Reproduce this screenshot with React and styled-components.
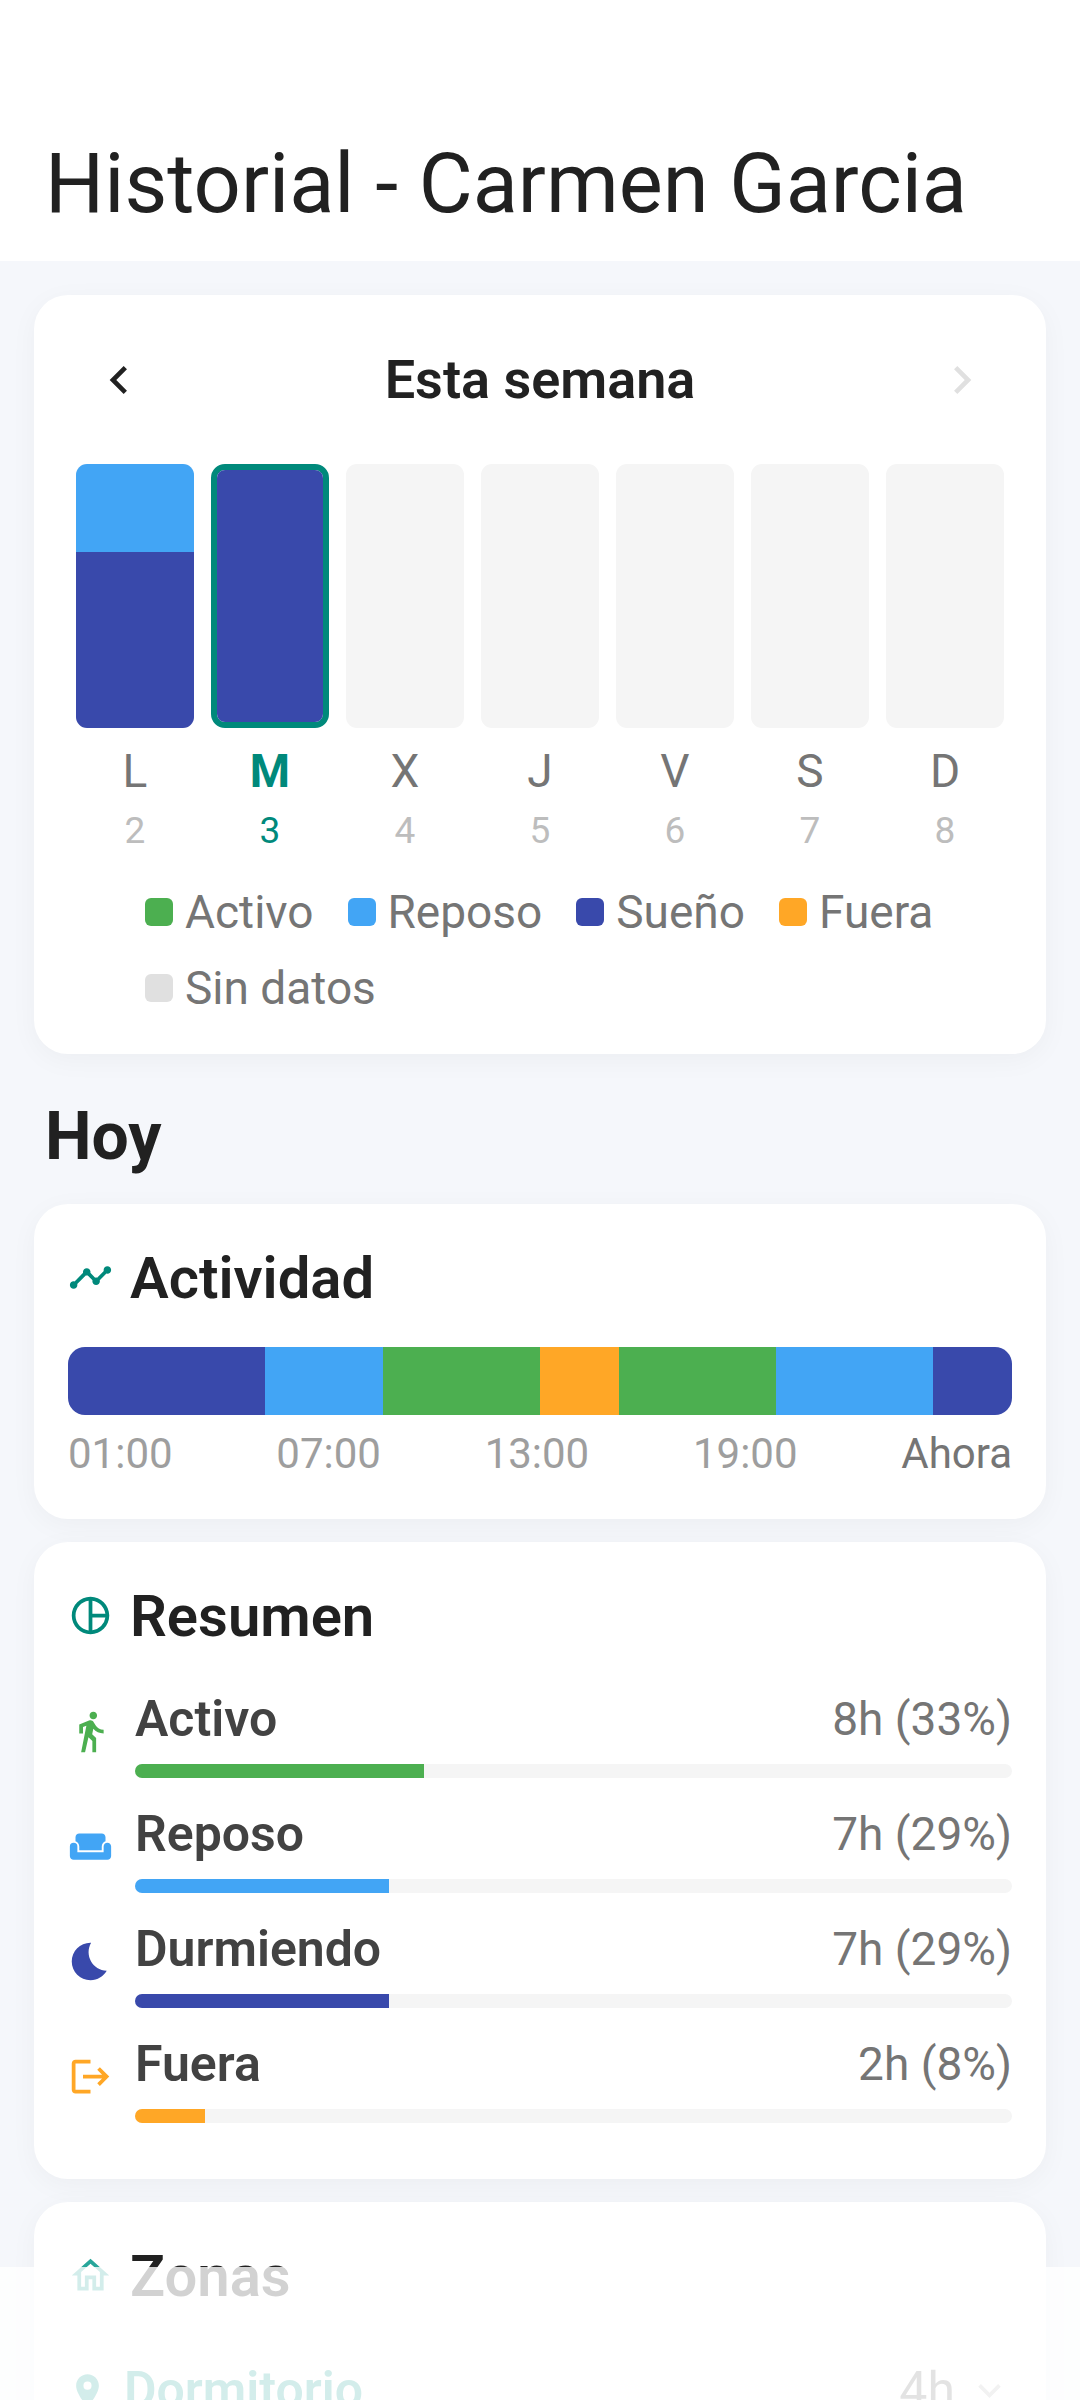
import { useState } from "react";
import styled, { createGlobalStyle, ThemeProvider } from "styled-components";
import {
    MdBedtime,
    MdChevronLeft,
    MdChevronRight,
    MdDirectionsWalk,
    MdExpandMore,
    MdLogout,
    MdOutlineHome,
    MdPieChartOutline,
    MdPlace,
    MdTimeline,
    MdWeekend,
} from "react-icons/md";

const theme = {
    colors: {
        background: "#f5f7fb",
        card: "#ffffff",
        primary: "#00897b",
        zone: "#26a69a",
        text: "#212121",
        label: "#424242",
        secondary: "#757575",
        muted: "#9e9e9e",
        faint: "#bdbdbd",
        disabled: "#e0e0e0",
        track: "#f5f5f5",
        active: "#4caf50",
        rest: "#42a5f5",
        sleep: "#3949ab",
        away: "#ffa726",
    },
};

const GlobalStyle = createGlobalStyle`
    * {
        box-sizing: border-box;
    }
    body {
        margin: 0;
        font-family: Roboto, "Liberation Sans", sans-serif;
        font-weight: 450;
        color: ${(props) => props.theme.colors.text};
        background-color: ${(props) => props.theme.colors.background};
    }
    h1, h2, h3, ul {
        margin: 0;
        padding: 0;
    }
    ul {
        list-style: none;
    }
    button {
        padding: 0;
        border: none;
        background: none;
        font: inherit;
        color: inherit;
        cursor: pointer;
    }
    svg {
        display: block;
        flex: none;
    }
`;

const Screen = styled.div`
    height: 100vh;
    display: flex;
    flex-direction: column;
`;

const Header = styled.header`
    flex: none;
    padding: 106px 45px 0;
    background-color: ${(props) => props.theme.colors.card};
`;

const Title = styled.h1`
    font-size: 83px;
    line-height: 155px;
    font-weight: 450;
    white-space: nowrap;
`;

const Content = styled.main`
    flex: 1;
    min-height: 0;
    padding: 34px;
    overflow-y: auto;
    scrollbar-width: none;
`;

const Card = styled.section`
    padding: 34px;
    border-radius: 34px;
    background-color: ${(props) => props.theme.colors.card};
    box-shadow: 0 6px 28px rgba(0, 0, 0, 0.04);

    & + & {
        margin-top: 23px;
    }
`;

const WeekNav = styled.div`
    display: flex;
    align-items: center;
    justify-content: space-between;
    margin-bottom: 34px;
`;

const WeekTitle = styled.h2`
    font-size: 54px;
    line-height: 64px;
    font-weight: 600;
`;

const NavButton = styled.button`
    width: 101px;
    height: 101px;
    display: flex;
    align-items: center;
    justify-content: center;
    font-size: 56px;

    &:disabled {
        color: ${(props) => props.theme.colors.disabled};
        cursor: default;
    }
`;

const Week = styled.div`
    display: flex;
    gap: 17px;
    padding-inline: 8px;
`;

const Day = styled.button`
    flex: 1;
    display: flex;
    flex-direction: column;
    text-align: center;
`;

const DayBar = styled.span`
    height: 264px;
    display: flex;
    flex-direction: column;
    margin-bottom: 17px;
    border-radius: ${(props) => (props.$selected ? "14px" : "11px")};
    border: ${(props) => (props.$selected ? `6px solid ${props.theme.colors.primary}` : "none")};
    background-color: ${(props) => props.theme.colors.track};
    overflow: hidden;
`;

const Segment = styled.span`
    flex: ${(props) => props.$hours} 0 0;
    background-color: ${(props) => props.theme.colors[props.$state]};
`;

const DayName = styled.span`
    margin-bottom: 11px;
    font-size: 46px;
    line-height: 53px;
    font-weight: ${(props) => (props.$selected ? 700 : 450)};
    color: ${(props) => (props.$selected ? props.theme.colors.primary : props.theme.colors.secondary)};
`;

const DayNumber = styled.span`
    font-size: 37px;
    line-height: 43px;
    color: ${(props) => (props.$selected ? props.theme.colors.primary : props.theme.colors.faint)};
`;

const Legend = styled.ul`
    display: flex;
    flex-wrap: wrap;
    gap: 12px 34px;
    margin-top: 28px;
    padding-inline: 77px;
`;

const LegendItem = styled.li`
    display: flex;
    align-items: center;
    gap: 12px;
    font-size: 46px;
    line-height: 64px;
    color: ${(props) => props.theme.colors.secondary};

    &::before {
        content: "";
        width: 28px;
        height: 28px;
        border-radius: 6px;
        background-color: ${(props) => props.theme.colors[props.$state]};
    }
`;

const SectionTitle = styled.h2`
    margin: 45px 11px 29px;
    font-size: 66px;
    line-height: 76px;
    font-weight: 700;
`;

const CardHeader = styled.div`
    height: 79px;
    display: flex;
    align-items: center;
    gap: 17px;
    margin-bottom: 30px;

    & svg {
        font-size: 45px;
        color: ${(props) => props.theme.colors[props.$color || "primary"]};
    }
`;

const CardTitle = styled.h3`
    font-size: 58px;
    line-height: 68px;
    font-weight: 600;
`;

const Timeline = styled.div`
    height: 68px;
    display: flex;
    border-radius: 17px;
    overflow: hidden;
`;

const Hours = styled.div`
    display: flex;
    justify-content: space-between;
    margin-top: 8px;
    font-size: 42px;
    line-height: 62px;
    color: ${(props) => props.theme.colors.muted};

    & :last-child {
        color: ${(props) => props.theme.colors.secondary};
    }
`;

const SummaryRow = styled.li`
    display: flex;
    align-items: center;
    gap: 22px;
    margin-bottom: 22px;

    & svg {
        font-size: 45px;
        color: ${(props) => props.theme.colors[props.$state]};
    }
`;

const SummaryBody = styled.div`
    flex: 1;
`;

const SummaryText = styled.div`
    display: flex;
    justify-content: space-between;
    align-items: center;
    margin-bottom: 11px;
    line-height: 68px;
`;

const SummaryLabel = styled.span`
    font-size: 50px;
    font-weight: 600;
    color: ${(props) => props.theme.colors.label};
`;

const SummaryValue = styled.span`
    font-size: 46px;
    color: ${(props) => props.theme.colors.secondary};
`;

const Track = styled.div`
    height: 14px;
    border-radius: 7px;
    background-color: ${(props) => props.theme.colors.track};
    overflow: hidden;
`;

const Fill = styled.div`
    height: 100%;
    background-color: ${(props) => props.theme.colors[props.$state]};
`;

const ZoneRow = styled.button`
    width: 100%;
    height: 90px;
    display: flex;
    align-items: center;
    font-size: 50px;
    line-height: 68px;
    text-align: left;
    color: ${(props) => props.theme.colors.zone};
`;

const ZoneName = styled.span`
    flex: 1;
    margin-left: 17px;
    font-weight: 600;
`;

const ZoneTime = styled.span`
    margin-right: 12px;
    color: ${(props) => props.theme.colors.secondary};
`;

const ZoneChevron = styled(MdExpandMore)`
    font-size: 45px;
    color: ${(props) => props.theme.colors.faint};
`;

// translucent system bar over the end of the list
const SystemBar = styled.div`
    position: fixed;
    inset: auto 0 0;
    height: 133px;
    background-color: rgba(255, 255, 255, 0.8);
    pointer-events: none;
`;

const week = [
    { name: "L", number: 2, segments: [["rest", 8], ["sleep", 16]] },
    { name: "M", number: 3, segments: [["sleep", 24]] },
    { name: "X", number: 4, segments: [] },
    { name: "J", number: 5, segments: [] },
    { name: "V", number: 6, segments: [] },
    { name: "S", number: 7, segments: [] },
    { name: "D", number: 8, segments: [] },
];

const legend = [
    ["active", "Activo"],
    ["rest", "Reposo"],
    ["sleep", "Sueño"],
    ["away", "Fuera"],
    ["disabled", "Sin datos"],
];

const activity = [
    ["sleep", 5],
    ["rest", 3],
    ["active", 4],
    ["away", 2],
    ["active", 4],
    ["rest", 4],
    ["sleep", 2],
];

const summary = [
    { state: "active", label: "Activo", hours: 8, percent: 33, icon: MdDirectionsWalk },
    { state: "rest", label: "Reposo", hours: 7, percent: 29, icon: MdWeekend },
    { state: "sleep", label: "Durmiendo", hours: 7, percent: 29, icon: MdBedtime },
    { state: "away", label: "Fuera", hours: 2, percent: 8, icon: MdLogout },
];

function WeekCard() {
    const [selectedDay, setSelectedDay] = useState(3);

    return (
        <Card>
            <WeekNav>
                <NavButton aria-label="Semana anterior"><MdChevronLeft /></NavButton>
                <WeekTitle>Esta semana</WeekTitle>
                <NavButton aria-label="Semana siguiente" disabled><MdChevronRight /></NavButton>
            </WeekNav>
            <Week>
                {week.map(({ name, number, segments }) => {
                    const selected = number === selectedDay;
                    return (
                        <Day key={number} aria-pressed={selected} onClick={() => setSelectedDay(number)}>
                            <DayBar $selected={selected}>
                                {segments.map(([state, hours]) => (
                                    <Segment key={state} $state={state} $hours={hours} />
                                ))}
                            </DayBar>
                            <DayName $selected={selected}>{name}</DayName>
                            <DayNumber $selected={selected}>{number}</DayNumber>
                        </Day>
                    );
                })}
            </Week>
            <Legend>
                {legend.map(([state, label]) => (
                    <LegendItem key={state} $state={state}>{label}</LegendItem>
                ))}
            </Legend>
        </Card>
    );
}

function ActivityCard() {
    return (
        <Card>
            <CardHeader>
                <MdTimeline />
                <CardTitle>Actividad</CardTitle>
            </CardHeader>
            <Timeline>
                {activity.map(([state, hours], index) => (
                    <Segment key={index} $state={state} $hours={hours} />
                ))}
            </Timeline>
            <Hours>
                <span>01:00</span>
                <span>07:00</span>
                <span>13:00</span>
                <span>19:00</span>
                <span>Ahora</span>
            </Hours>
        </Card>
    );
}

function SummaryCard() {
    return (
        <Card>
            <CardHeader>
                <MdPieChartOutline />
                <CardTitle>Resumen</CardTitle>
            </CardHeader>
            <ul>
                {summary.map(({ state, label, hours, percent, icon: Icon }) => (
                    <SummaryRow key={state} $state={state}>
                        <Icon />
                        <SummaryBody>
                            <SummaryText>
                                <SummaryLabel>{label}</SummaryLabel>
                                <SummaryValue>{`${hours}h (${percent}%)`}</SummaryValue>
                            </SummaryText>
                            <Track>
                                <Fill $state={state} style={{ width: `${percent}%` }} />
                            </Track>
                        </SummaryBody>
                    </SummaryRow>
                ))}
            </ul>
        </Card>
    );
}

function ZonesCard() {
    return (
        <Card>
            <CardHeader $color="zone">
                <MdOutlineHome />
                <CardTitle>Zonas</CardTitle>
            </CardHeader>
            <ZoneRow>
                <MdPlace size={39} />
                <ZoneName>Dormitorio</ZoneName>
                <ZoneTime>4h</ZoneTime>
                <ZoneChevron />
            </ZoneRow>
        </Card>
    );
}

export default function App() {
    return (
        <ThemeProvider theme={theme}>
            <GlobalStyle />
            <Screen>
                <Header>
                    <Title>Historial - Carmen Garcia</Title>
                </Header>
                <Content>
                    <WeekCard />
                    <SectionTitle>Hoy</SectionTitle>
                    <ActivityCard />
                    <SummaryCard />
                    <ZonesCard />
                </Content>
            </Screen>
            <SystemBar />
        </ThemeProvider>
    );
}
